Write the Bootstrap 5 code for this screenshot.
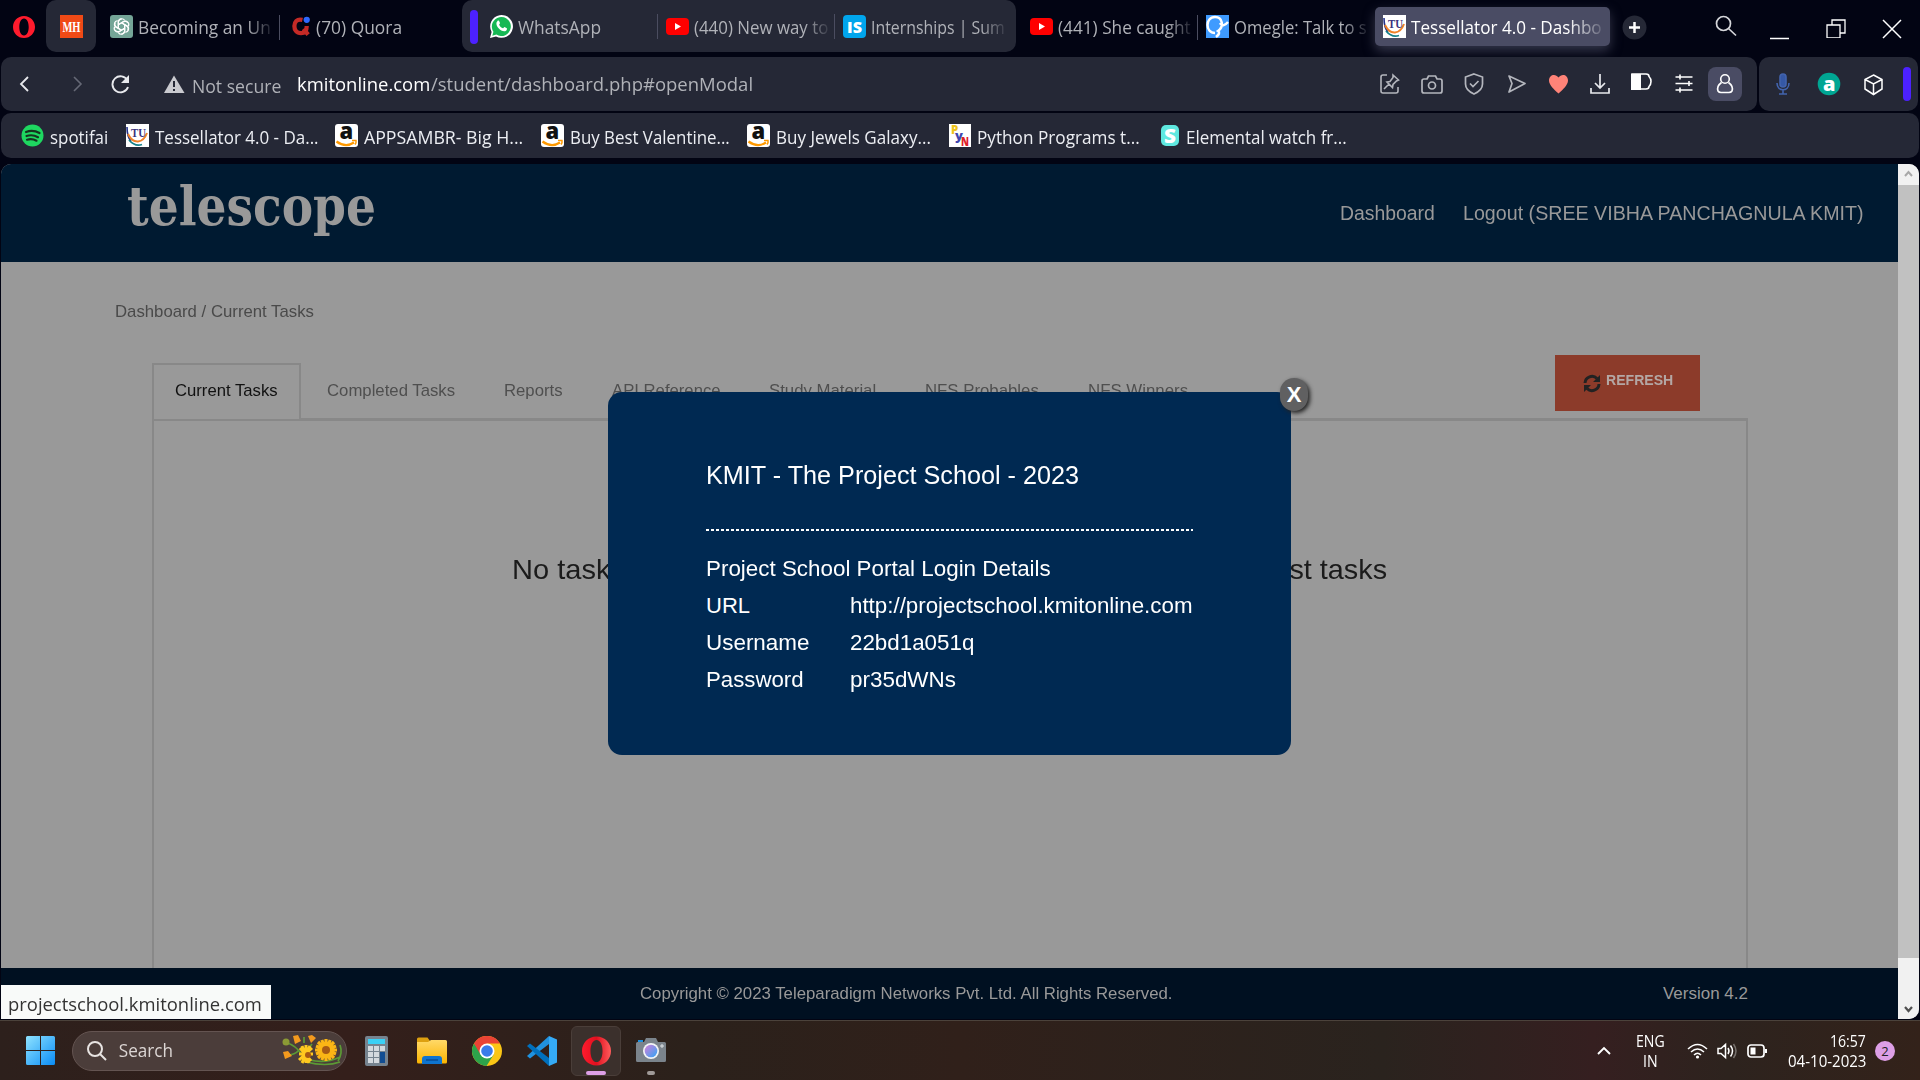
<!DOCTYPE html>
<html lang="en">
<head>
<meta charset="utf-8">
<title>Tessellator 4.0 - Dashboard</title>
<link href="https://cdn.jsdelivr.net/npm/bootstrap@5.3.0/dist/css/bootstrap.min.css" rel="stylesheet">
<style>
html,body{height:100%}
body{width:1920px;height:1080px;overflow:hidden;background:#020413;font-family:"Open Sans","Noto Sans",sans-serif;color:#b0b2b8;line-height:1.2}
svg{display:block;flex:none}
.fit{display:inline-block;white-space:nowrap;transform-origin:0 50%;flex:none}
.arial{font-family:"Liberation Sans",Arial,sans-serif}
/* tab strip */
.strip{height:54px;font-size:18px;padding-left:12px}
.strip .tabbox{height:52px;align-self:flex-start;padding-top:1px}
.pin{width:50px;background:#252836;border-radius:10px;margin-left:10px;justify-content:center}
.tab-gpt{margin-left:14px;width:169px}
.tab-quora{width:182px}
.tabgroup{background:#252836;border-radius:10px;width:554px;padding-left:8px}
.mark-bar{width:8px;height:34px;border-radius:4px;background:#4c21ff;flex:none}
.tab-wa{margin-left:12px;width:167px}
.tab-nw{width:176px;padding-left:8px}
.tab-in{padding-left:8px}
.tab-sc{width:181px;padding-left:14px}
.tab-om{width:177px;padding-left:8px}
.tab-live{width:235px;height:39px;background:#4a4c64;border-radius:5px;color:#fff;padding-left:8px;box-shadow:0 5px 12px #34364a;margin-top:-1px}
.sep{width:1px;height:25px;background:#4b4d60;flex:none}
.t{margin-left:5px}
.strip .t{padding-top:2px}
.fade-end{-webkit-mask-image:linear-gradient(90deg,#000 82%,transparent 103%);mask-image:linear-gradient(90deg,#000 82%,transparent 103%)}
.plus{margin-left:12px}
.find{margin-left:68px}.mini{margin-left:33px}.rest{margin-left:37px}.shut{margin-left:36px}
/* toolbar */
.bars{padding:3px 1px 0 1px;gap:2px}
.tool{height:54px;background:#252836;border-radius:10px}
.addr{width:1756px;padding-left:17px;font-size:19px}
.side{width:159px;padding-left:12px}
.bm{height:45px;background:#252836;border-radius:10px;margin:2px 1px 0;padding-left:20px;color:#eceef3;font-size:17.5px}
.bm .g{margin-left:17.300px}.bm .t{margin-left:6px;padding-top:3px}
.addr-ic{padding-right:15px;gap:16px}
.userbox{width:34px;height:34px;border-radius:8px;background:#4a4c64;margin-left:-5px}
/* page */
.view{margin:6px 1px 0;height:855px;border-radius:10px 10px 10px 0;overflow:hidden;position:relative}
.pg{width:1897px;background:#999}
.head{height:98px;background:#001a31;color:#999;padding-right:18px}
.head .lnk{font-size:20px}
.logo{font-family:"DejaVu Serif Condensed","DejaVu Serif",serif;font-stretch:condensed;font-weight:700;font-size:54px;line-height:1;margin-left:126px;padding-bottom:14px}
.crumbs{padding:40px 0 0 114px;font-size:17px;color:#4a4a4a;height:93px}
.tabrow{height:63px;padding-left:151px;font-size:17px;color:#4f4f4f;position:relative}
.tb{height:55px;align-self:flex-end;padding-top:1px}
.tb.on{width:149px;border:2px solid #888;border-bottom:0;color:#111;padding:0 0 1px 21px}
.g26{margin-left:26px}.g49{margin-left:49px}
.refresh{width:145px;height:56px;background:#8c3b2a;color:#b4a7a4;font-weight:700;font-size:14.5px;margin-left:367px;align-self:flex-start;padding-left:27px;border-radius:0}
.refresh .t{margin-top:-4px}
.panelbox{margin-left:151px;width:1596px;border:2px solid #888;border-top:3px solid #888;border-bottom:0;flex:1;padding:132px 0 0 358px}
.joined{width:145px;height:2px;background:#999;position:absolute;left:153px;bottom:-1px}
.notice{width:875px;font-size:28px;color:#1b1b1b}
.foot{height:51px;background:#001021;color:#999;font-size:17px;padding-top:1px}
.foot-v{margin-left:490px}
.foot-e{width:150px}
.scroll{width:21px;background:#c1c1c1}
.dlg{position:absolute;left:607px;top:228px;width:683px;height:363px;background:#002952;border-radius:14px;color:#fff;padding:68px 98px 0;font-size:22px}
.dlg .ttl{font-size:25px;height:69px}
.dots{height:2px;width:487px;background:repeating-linear-gradient(90deg,#fff 0 3px,transparent 3px 5px);margin-bottom:20px}
.dlg .ln{height:37px}
.dlg .k{width:144px}
.shutx{position:absolute;left:672px;top:-14px;width:28px;height:33px;border-radius:14px;background:#606061;box-shadow:2px 2px 4px #222;font-weight:700;font-size:22px;line-height:33px;text-align:center}
.hint{position:absolute;left:0;bottom:0;width:270px;height:34px;background:#f8faf9;color:#333;font-size:19px;padding:4px 0 0 7px}
/* taskbar */
.task{margin-top:1px;height:60px;border-top:1px solid #4b423b;background:linear-gradient(90deg,#2d201c,#341f1b 18%,#2b211b 36%,#30201a 50%,#2a231e 72%,#351f20 83%,#2d231e 90%,#33221a);padding-left:26px;color:#fff}
.pill{width:275px;height:40px;border-radius:20px;background:#4b3d3a;border:1px solid #645451;margin-left:17px;padding-left:14px;color:#dcd6d4;font-size:18px}
.opbox{width:50px;height:50px;border-radius:6px;background:#3b302c;border:1px solid #4a3e39;margin-left:14px;position:relative}
.under{position:absolute;bottom:0;left:14px;width:20px;height:4px;border-radius:2px;background:#dd9fe6}
.cam{margin-left:15px;position:relative}
.cam i{position:absolute;left:11px;top:33px;width:8px;height:4px;border-radius:2px;background:#a09a98}
.tray{font-size:16px;line-height:20px;padding-right:25px}
.badge2{width:20px;height:20px;border-radius:50%;background:#dd9fe6;color:#222;font-size:13px;line-height:20px;text-align:center}
.m9{margin-left:9px}.m18{margin-left:18px}.m19{margin-left:19px}.m20{margin-left:20px}.m25{margin-left:25px}.m29{margin-left:29px}.m22{margin-left:22px}
</style>
<script src="https://cdn.jsdelivr.net/npm/bootstrap@5.3.0/dist/js/bootstrap.bundle.min.js"></script>
</head>
<body>
<svg width="0" height="0" class="position-absolute">
<defs>
<linearGradient id="win" x2="1" y2="1"><stop stop-color="#8fe3ff"/><stop offset="1" stop-color="#0a8cf5"/></linearGradient>
<linearGradient id="op" x2="1"><stop stop-color="#ff1b2d"/><stop offset=".5" stop-color="#e0101f"/><stop offset="1" stop-color="#ff5c5c"/></linearGradient>
<linearGradient id="fold" x2="0" y2="1"><stop stop-color="#ffd968"/><stop offset="1" stop-color="#fbb400"/></linearGradient>
<linearGradient id="lens" x2="1" y2="1"><stop stop-color="#d67fd9"/><stop offset="1" stop-color="#2fa4f5"/></linearGradient>
<symbol id="tu" viewBox="0 0 23 23"><path fill="#fff" d="M0 0h23v23H0z"/><path fill="none" stroke="#25338a" stroke-width="1.600" d="M1 3q0 10 4 14"/><path fill="none" stroke="#f08228" stroke-width="2" d="M2 10q4 8 10 7.500 6-.5 9-8.500"/><path fill="none" stroke="#15808a" stroke-width="1.800" d="M3 16q6 7 13 4.500"/><text x="5" y="12.500" font-family="Liberation Serif,serif" font-weight="700" font-size="12" textLength="15" lengthAdjust="spacingAndGlyphs" fill="#3a3280">TU</text></symbol>
<symbol id="amz" viewBox="0 0 23 23"><rect width="23" height="23" rx="3" fill="#fff"/><text x="4.500" y="15" font-family="Open Sans,sans-serif" font-weight="800" font-size="22" fill="#111">a</text><path fill="none" stroke="#ff9900" stroke-width="2.200" d="M1.500 17.500q9 6.500 17.500 1"/><path fill="none" stroke="#ff9900" stroke-width="1.500" d="M17 16.500h4q.5 2-1 4"/></symbol>
<symbol id="yt" viewBox="0 0 23 23"><rect y="3" width="23" height="17" rx="4" fill="#f00"/><path fill="#fff" d="M9 8l6 3.500-6 3.500z"/></symbol>
</defs></svg>

<!-- tab strip -->
<div class="strip d-flex align-items-center">
  <svg width="24" height="24" viewBox="0 0 24 24"><path fill="#ff1b2d" fill-rule="evenodd" d="M12 1C5.500 1 1 6 1 12s4.500 11 11 11 11-5 11-11S18.500 1 12 1zm0 2.500c3 0 4.700 3.700 4.700 8.500S15 20.500 12 20.500 7.300 16.800 7.300 12 9 3.500 12 3.500z"/></svg>
  <div class="tabbox pin d-flex align-items-center"><svg width="23" height="23"><path fill="#f04a16" d="M0 0h23v23H0z"/><text x="2.500" y="17" font-family="Liberation Serif,serif" font-weight="700" font-size="15" textLength="18" lengthAdjust="spacingAndGlyphs" fill="#fff">MH</text></svg></div>
  <div class="tabbox tab-gpt d-flex align-items-center">
    <svg width="23" height="23" viewBox="0 0 23 23"><rect width="23" height="23" rx="3" fill="#74a597"/><g fill="none" stroke="#fff" stroke-width="1.200"><path id="petal" d="M8.300 13.400V7.200a3.400 3.400 0 0 1 6.300-1.800M8.300 9.700l5-2.900a3.400 3.400 0 0 1 4.700 1.200"/><use href="#petal" transform="rotate(60 11.500 11.500)"/><use href="#petal" transform="rotate(120 11.500 11.500)"/><use href="#petal" transform="rotate(180 11.500 11.500)"/><use href="#petal" transform="rotate(240 11.500 11.500)"/><use href="#petal" transform="rotate(300 11.500 11.500)"/></g></svg>
    <span class="t fade-end"><span class="fit" data-w="133">Becoming an Un</span></span>
  </div>
  <div class="sep"></div>
  <div class="tabbox tab-quora d-flex align-items-center">
    <svg class="ms-2 ps-1" width="23" height="23" viewBox="0 0 20 23"><path fill="none" stroke="#c42a26" stroke-width="4.500" d="M11 4.500C5 3 2.500 7 2.500 11s2 7.500 7 7.500c4.500 0 6-3 6-7.500M12 14l5 6"/><circle cx="15.500" cy="4.500" r="3.300" fill="#2e69ff"/></svg>
    <span class="t fit" data-w="86">(70) Quora</span>
  </div>
  <div class="tabbox tabgroup d-flex align-items-center">
    <div class="mark-bar"></div>
    <div class="tab-wa d-flex align-items-center"><svg width="23" height="23" viewBox="0 0 23 23"><path fill="#fff" d="M0 23l1.600-6A11.400 11.400 0 1 1 6 21.400z"/><path fill="#16b854" d="M2.300 20.700l1.100-4A9.500 9.500 0 1 1 6.400 19.600z"/><path fill="#fff" d="M7.500 6c.6-.6 1.400-.6 1.700.2l.8 1.900c0 .6-.9 1.200-.8 1.600.7 1.700 2 2.900 3.800 3.600.6.100 1-1.200 1.600-1.200l2.200 1.100c.5.300 0 1.900-.8 2.500-3.500 2.300-10.600-3.700-9.500-8.200z"/></svg><span class="t fit" data-w="83">WhatsApp</span></div>
    <div class="sep"></div>
    <div class="tab-nw d-flex align-items-center"><svg width="23" height="23"><use href="#yt"/></svg><span class="t fade-end"><span class="fit" data-w="134">(440) New way to</span></span></div>
    <div class="sep"></div>
    <div class="tab-in d-flex align-items-center"><svg width="23" height="23"><rect width="23" height="23" rx="4" fill="#00a5ec"/><text x="4" y="17.500" font-family="Open Sans,sans-serif" font-weight="800" font-size="16.500" textLength="15" lengthAdjust="spacingAndGlyphs" fill="#fff">IS</text></svg><span class="t fade-end"><span class="fit" data-w="134">Internships | Sum</span></span></div>
  </div>
  <div class="tabbox tab-sc d-flex align-items-center"><svg width="23" height="23"><use href="#yt"/></svg><span class="t fade-end"><span class="fit" data-w="133">(441) She caught</span></span></div>
  <div class="sep"></div>
  <div class="tabbox tab-om d-flex align-items-center"><svg width="23" height="23"><path fill="#3f9bff" d="M0 0h23v23H0z"/><path fill="none" stroke="#fff" stroke-width="2.500" d="M9 18c-10 0-10-16 0-16 8 0 9 10 3 14q3 2-2 6M14 8q3 5 8-1"/></svg><span class="t fade-end"><span class="fit" data-w="133">Omegle: Talk to s</span></span></div>
  <div class="tab-live d-flex align-items-center"><svg width="23" height="23"><use href="#tu"/></svg><span class="t fade-end"><span class="fit" data-w="191">Tessellator 4.0 - Dashbo</span></span></div>
  <svg class="plus" width="25" height="25"><circle cx="12.500" cy="12.500" r="12" fill="#252836"/><path stroke="#fff" stroke-width="2.500" d="M12.500 7v11M7 12.500h11"/></svg>
  <svg class="find" width="22" height="24" fill="none" stroke="#d5d6da" stroke-width="1.700"><circle cx="8.500" cy="8.500" r="7"/><path d="M13.500 13.500l7.500 7"/></svg>
  <svg class="mini" width="19" height="26"><path stroke="#fff" stroke-width="1.500" d="M0 24.500h19"/></svg>
  <svg class="rest" width="20" height="22" fill="none" stroke="#fff" stroke-width="1.300"><path d="M1 9h13v13H1zM6 9V4h13v13h-5"/></svg>
  <svg class="shut" width="20" height="24" stroke="#fff" stroke-width="1.500"><path d="M1 5l18 18M19 5L1 23"/></svg>
</div>

<!-- address row -->
<div class="bars d-flex">
  <div class="tool addr d-flex align-items-center">
    <svg width="14" height="18" fill="none" stroke="#e8e9ed" stroke-width="1.800"><path d="M10 2L3 9l7 7"/></svg>
    <svg class="ms-3 ps-2 me-3" width="46" height="18" fill="none" stroke="#666976" stroke-width="1.600"><path d="M18 2l7 7-7 7"/></svg>
    <svg width="22" height="20" viewBox="0 0 22 20" fill="none" stroke="#e8e9ed" stroke-width="1.900"><path d="M17.500 6.500A8 8 0 1 0 18 13"/><path fill="#e8e9ed" stroke="none" d="M19 1v8h-8z"/></svg>
    <svg class="ms-4 ps-2" width="32" height="20"><path fill="#c9cacf" d="M10 1.500L20.500 19H0z"/><path stroke="#252836" stroke-width="2" d="M10 7v6M10 15v2"/></svg>
    <span class="fit ms-1 pt-1" data-w="89">Not secure</span>
    <span class="fit text-white ms-3" data-w="133">kmitonline.com</span>
    <span class="fit" data-w="322">/student/dashboard.php#openModal</span>
    <div class="addr-ic d-flex align-items-center ms-auto">
      <svg width="26" height="24" fill="none" stroke="#b4b6bd" stroke-width="1.600"><path d="M10 3H6q-2 0-2 2v14q0 2 2 2h13q2 0 2-2v-4"/><path d="M16 3l5.500 5-2 1-3.500 3.500-.5 3-5.500-5.500 3-.5 3-4zM12 12l-5 5"/></svg>
      <svg width="26" height="24" fill="none" stroke="#b4b6bd" stroke-width="1.700"><path d="M8 7l1.500-3h7L18 7h3q2 0 2 2v10q0 2-2 2H5q-2 0-2-2V9q0-2 2-2z"/><circle cx="13" cy="13.500" r="3.500"/></svg>
      <svg width="26" height="24" fill="none" stroke="#b4b6bd" stroke-width="1.700"><path d="M13 2l8.500 3v7c0 5-4 8-8.500 10-4.500-2-8.500-5-8.500-10V5z"/><path d="M9 11.500l3 3 5.500-5.500"/></svg>
      <svg width="26" height="24" fill="none" stroke="#b4b6bd" stroke-width="1.700" stroke-linejoin="round"><path d="M6 4l16 7.500L6 20l3-8.500z"/></svg>
      <svg width="26" height="24"><path fill="#ff8378" d="M13.500 21.500C9 17.500 4 13 4 8.500c0-6 6.500-7.500 9.500-3 3-4.500 9.500-3 9.500 3 0 4.500-5 9-9.500 13z"/></svg>
      <svg width="26" height="24" fill="none" stroke="#e8e9ed" stroke-width="1.700"><path d="M13 2v14M8 11l5 5 5-5M4 16v5h18v-5"/></svg>
      <svg width="26" height="24" viewBox="1 3 26 24"><path d="M4 5h14q3 0 3 2.500 2 2 2 5t-2 5Q21 20 18 20H4z" fill="none" stroke="#fff" stroke-width="1.600"/><path fill="#fff" d="M3 5h10v16H3z"/></svg>
      <svg width="26" height="24" fill="none" stroke="#fff" stroke-width="1.600"><path d="M4.500 5h17M4.500 11.500h17M4.500 18h17M9 2.500v5M18 9v5M9 15.500v5"/></svg>
      <div class="userbox d-flex align-items-center justify-content-center"><svg width="20" height="24" fill="none" stroke="#fff" stroke-width="1.600"><circle cx="10" cy="7" r="4.300"/><path d="M6.500 10.500C3 13 2 16 3 19q1 1.500 3 1.500h8q2 0 3-1.500c1-3 0-6-3.500-8.500"/></svg></div>
    </div>
  </div>
  <div class="tool side d-flex align-items-center">
    <svg width="24" height="24" fill="none" stroke="#4263ad" stroke-width="1.600"><rect x="9" y="2" width="6" height="13" rx="3" fill="#3558a6"/><path d="M6 11c0 9 12 9 12 0M12 18v4M8 22h8"/></svg>
    <svg class="m22" width="26" height="24"><circle cx="12" cy="12" r="11.300" fill="#00a693"/><text x="6" y="18.500" font-family="Open Sans,sans-serif" font-weight="800" font-size="20" fill="#fff">a</text></svg>
    <svg class="m20" width="22" height="24" fill="none" stroke="#fff" stroke-width="1.500"><path d="M10.500 3l8.500 4.500v9.500l-8.500 5.500L2 17V7.500zM2 7.500l8.500 4.500L19 7.500M10.500 12v10"/></svg>
    <div class="mark-bar m18"></div>
  </div>
</div>

<!-- bookmarks -->
<div class="bm d-flex align-items-center">
  <svg width="23" height="23"><circle cx="11.500" cy="11.500" r="11" fill="#1ed760"/><path fill="none" stroke="#16331f" stroke-width="2.200" stroke-linecap="round" d="M5 8q7-2.500 13.500 1M5.500 12q6-2 11.500 1.200M6 15.700q5-1.500 9.500 1"/></svg>
  <span class="t fit" data-w="58">spotifai</span>
  <svg class="g" width="23" height="23"><use href="#tu"/></svg><span class="t fit" data-w="164">Tessellator 4.0 - Da...</span>
  <svg class="g" width="23" height="23"><use href="#amz"/></svg><span class="t fit" data-w="159">APPSAMBR- Big H...</span>
  <svg class="g" width="23" height="23"><use href="#amz"/></svg><span class="t fit" data-w="160">Buy Best Valentine...</span>
  <svg class="g" width="23" height="23"><use href="#amz"/></svg><span class="t fit" data-w="155">Buy Jewels Galaxy...</span>
  <svg class="g" width="23" height="23"><path fill="#fff" d="M1 0h22v23H1z"/><g font-family="Open Sans,sans-serif" font-weight="800"><text x="3" y="10" font-size="11.500" fill="#eec41c">P</text><text x="7" y="16" font-size="13" fill="#4046b0">y</text><text x="13" y="22" font-size="12" textLength="8" lengthAdjust="spacingAndGlyphs" fill="#e0202a">N</text></g></svg><span class="t fit" data-w="163">Python Programs t...</span>
  <svg class="ms-3 ps-1" width="24" height="23" viewBox="-2 0 20 23"><rect y="1" x="-1" width="18" height="21" rx="5" fill="#5fe8e0"/><text x="2" y="18.500" font-family="Open Sans,sans-serif" font-weight="800" font-size="19" textLength="12" lengthAdjust="spacingAndGlyphs" fill="#fff">S</text></svg><span class="t fit" data-w="161">Elemental watch fr...</span>
</div>

<!-- page -->
<div class="view d-flex">
  <div class="pg arial d-flex flex-column">
    <div class="head d-flex align-items-center">
      <span class="logo"><span class="fit" data-w="249">telescope</span></span>
      <span class="fit lnk ms-auto" data-w="95">Dashboard</span>
      <span class="ps-1"></span>
      <span class="fit lnk m25" data-w="401">Logout (SREE VIBHA PANCHAGNULA KMIT)</span>
      <span class="ps-3"></span>
    </div>
    <div class="crumbs"><span class="fit" data-w="199">Dashboard / Current Tasks</span></div>
    <div class="tabrow d-flex">
      <div class="tb on d-flex align-items-center"><span class="fit" data-w="103">Current Tasks</span></div>
      <div class="tb d-flex align-items-center">
        <span class="fit g26" data-w="128">Completed Tasks</span>
        <span class="fit g49" data-w="59">Reports</span>
        <span class="fit g49" data-w="109">API Reference</span>
        <span class="fit g49" data-w="107.500">Study Material</span>
        <span class="fit g49" data-w="113.500">NFS Probables</span>
        <span class="fit g49" data-w="100">NFS Winners</span>
      </div>
      <div class="refresh btn d-flex align-items-center">
        <svg width="18" height="19" fill="none" stroke="#222" stroke-width="3"><path d="M2 9a7 7 0 0 1 12-4.500M16 10a7 7 0 0 1-12 4.500"/><path fill="#222" stroke="none" d="M17 1v7h-7zM1 18v-7h7z"/></svg>
        <span class="t fit" data-w="67">REFRESH</span>
      </div>
      <div class="joined"></div>
    </div>
    <div class="panelbox"><div class="notice d-flex justify-content-between"><span class="fit" data-w="113">No tasks</span><span class="fit" data-w="144">latest tasks</span></div></div>
    <div class="foot d-flex align-items-center"><span class="fit ms-auto" data-w="532">Copyright © 2023 Teleparadigm Networks Pvt. Ltd. All Rights Reserved.</span><span class="fit foot-v" data-w="85">Version 4.2</span><span class="foot-e"></span></div>
  </div>
  <div class="scroll">
    <svg width="21" height="855"><path fill="#f1f1f1" d="M0 0h21v21H0zM0 794h21v61H0z"/><path fill="none" stroke="#a8a8a8" stroke-width="2" d="M7 12l3.500-4 3.500 4"/><path fill="none" stroke="#505050" stroke-width="2.200" d="M7 843l3.500 4 3.500-4"/></svg>
  </div>
  <div class="dlg arial">
    <div class="ttl"><span class="fit" data-w="373">KMIT - The Project School - 2023</span></div>
    <div class="dots"></div>
    <div class="ln d-flex align-items-center"><span class="fit" data-w="345">Project School Portal Login Details</span></div>
    <div class="ln d-flex align-items-center"><span class="k">URL</span><span class="fit" data-w="343">http://projectschool.kmitonline.com</span></div>
    <div class="ln d-flex align-items-center"><span class="k"><span class="fit" data-w="103">Username</span></span><span class="fit" data-w="124">22bd1a051q</span></div>
    <div class="ln d-flex align-items-center"><span class="k"><span class="fit" data-w="98">Password</span></span><span class="fit" data-w="106">pr35dWNs</span></div>
    <div class="shutx">X</div>
  </div>
  <div class="hint d-flex align-items-center"><span class="fit" data-w="254">projectschool.kmitonline.com</span></div>
</div>

<!-- taskbar -->
<div class="task d-flex align-items-center">
  <svg width="29" height="29" fill="url(#win)"><path d="M0 1.500Q0 0 1.500 0H14v14H0zM15 0h12.500Q29 0 29 1.500V14H15zM0 15h14v14H1.500Q0 29 0 27.500zM15 15h14v12.500q0 1.500-1.500 1.500H15z"/></svg>
  <div class="pill d-flex align-items-center">
    <svg width="20" height="20" fill="none" stroke="#e8e4e2" stroke-width="2"><circle cx="8" cy="8" r="7"/><path d="M13 13l6 6"/></svg>
    <span class="fit ms-2 ps-1" data-w="58">Search</span>
    <svg class="ms-auto" width="64" height="34" viewBox="0 0 64 34">
      <g fill="none" stroke="#5c9a35" stroke-width="1.700"><path d="M3 8q12 4 16 12M22 9V3M5 21q8 0 12-5M30 10q-4 5-8 10M24 28q20 5 34 0M56 27q5-8 2-16M28 26q15 4 30-3"/></g>
      <circle cx="4" cy="8" r="3.500" fill="#8b9a35"/>
      <path fill="#f39a1e" d="M11 2l5-1 3 6-6 3zM26 2l4-1 4 3-5 5zM1 18l5-1 4 5-7 3z"/>
      <g stroke="#fbb515" stroke-width="3.200"><path d="M44 5v22M33 16h22M36 8l16 16M36 24L52 8M39.800 6l8.400 20M48.200 6l-8.400 20M34 12l20 8M34 20l20-8"/></g>
      <circle cx="44" cy="16" r="4" fill="#a85a14"/>
      <g stroke="#ffc91f" stroke-width="3"><path d="M24 11v18M17 20h14M18 14l11 13M17 26l13-12M20 12l7 17M28 12l-8 17"/></g><circle cx="26" cy="21" r="3" fill="#a85a14"/>
    </svg>
  </div>
  <svg class="m18" width="23" height="30"><rect width="23" height="30" rx="2" fill="#76838f"/><path fill="#3bd0f5" d="M3 3h17v5H3z"/><path fill="#d4d9de" d="M3 10h5v5H3zM9 10h5v5H9zM15 10h5v5h-5zM3 16h5v5H3zM9 16h5v5H9zM3 22h5v5H3zM9 22h5v5H9z"/><path fill="#124d92" d="M15 16h5v11h-5z"/></svg>
  <svg class="m29" width="30" height="28"><path fill="#dda010" d="M0 2q0-1.500 1.500-1.500h9L13 4v6H0z"/><path fill="url(#fold)" d="M0 5h11l3-2h14.500Q30 3 30 4.500V25q0 1.500-1.500 1.500h-27Q0 26.500 0 25z"/><path fill="#0f74cf" d="M5 27v-5q0-3 3-3h14q3 0 3 3v5z"/><path stroke="#084c96" stroke-width="1.500" d="M9 23h12"/></svg>
  <svg class="m25" width="30" height="30" viewBox="0 0 30 30"><circle cx="15" cy="15" r="15" fill="#fbc616"/><path fill="#2da34b" d="M2 7.500A15 15 0 0 0 14.500 30L22 18l-7 3z"/><path fill="#ea4335" d="M2 7.500A15 15 0 0 1 28 7.500H15l-6.500 11z"/><circle cx="15" cy="15" r="7.500" fill="#fff"/><circle cx="15" cy="15" r="5.800" fill="#3a7bea"/></svg>
  <svg class="m25" width="30" height="30"><path fill="#2092e0" d="M22 0v8L3 22.500 0 20z"/><path fill="#0070bd" d="M22 30v-8L3 7.500 0 10z"/><path fill="#35aaf5" d="M22 0l8 3.500v23L22 30z"/></svg>
  <div class="opbox d-flex align-items-center justify-content-center"><svg width="29" height="30" viewBox="0 0 24 24"><path fill="url(#op)" fill-rule="evenodd" d="M12 0C5 0 0 5.500 0 12s5 12 12 12 12-5.500 12-12S19 0 12 0zm0 2.800c3.200 0 5 4.200 5 9.200s-1.800 9.200-5 9.200-5-4.200-5-9.200 1.800-9.200 5-9.200z"/></svg><div class="under"></div></div>
  <div class="cam"><svg width="30" height="25" viewBox="0 0 30 25"><path fill="#1c90e0" d="M2 2h5v3H2z"/><path fill="#7b848c" d="M1.500 4H8l2-4h10l2 4h6.500Q30 4 30 5.500v17q0 1.500-1.500 1.500h-27Q0 24 0 22.500v-17Q0 4 1.500 4z"/><circle cx="15" cy="13" r="8" fill="#f2f4f6"/><circle cx="15" cy="13" r="6.300" fill="url(#lens)"/><path stroke="#dfe3e6" d="M24 8h4M26 6v4"/></svg><i></i></div>
  <div class="tray d-flex align-items-center ms-auto">
    <svg width="14" height="10" fill="none" stroke="#fff" stroke-width="1.900"><path d="M1 8l6-6 6 6"/></svg>
    <div class="text-center m25"><span class="fit" data-w="29">ENG</span><br><span class="fit" data-w="15">IN</span></div>
    <svg class="m22" width="21" height="18" fill="none" stroke="#fff" stroke-width="1.500"><path d="M1 7q9.500-9 19 0M4 10q6.500-6 13 0M7 13q3.500-3.500 7 0"/><circle cx="10.500" cy="15" r="1.600" fill="#fff" stroke="none"/></svg>
    <svg class="m9" width="21" height="18" fill="none" stroke="#fff" stroke-width="1.500"><path d="M1 6.500h3l4.500-4v13l-4.500-4H1zM11 6q2 3 0 6M13.500 3.500q4 5.500 0 11"/><path stroke="#76706c" d="M16.500 2q5 7 0 14"/></svg>
    <svg class="m9" width="21" height="16" fill="none" stroke="#fff" stroke-width="1.700"><rect x="1" y="2" width="16" height="12" rx="3"/><path fill="#fff" stroke="none" d="M3.500 4.500h5v7h-5zM18 6h2v4h-2z"/></svg>
    <div class="text-end m20"><span class="fit" data-w="36">16:57</span><br><span class="fit" data-w="78">04-10-2023</span></div>
    <div class="badge2 m9">2</div>
  </div>
</div>
<script>
// Condense each label to the width reserved for it in data-w.
document.querySelectorAll('.fit').forEach(function(e){
  var n=e.offsetWidth,w=+e.dataset.w;
  e.style.transform='scaleX('+(w/n)+')';
  e.style.marginRight=(w-n)+'px';
});
</script>
</body>
</html>
